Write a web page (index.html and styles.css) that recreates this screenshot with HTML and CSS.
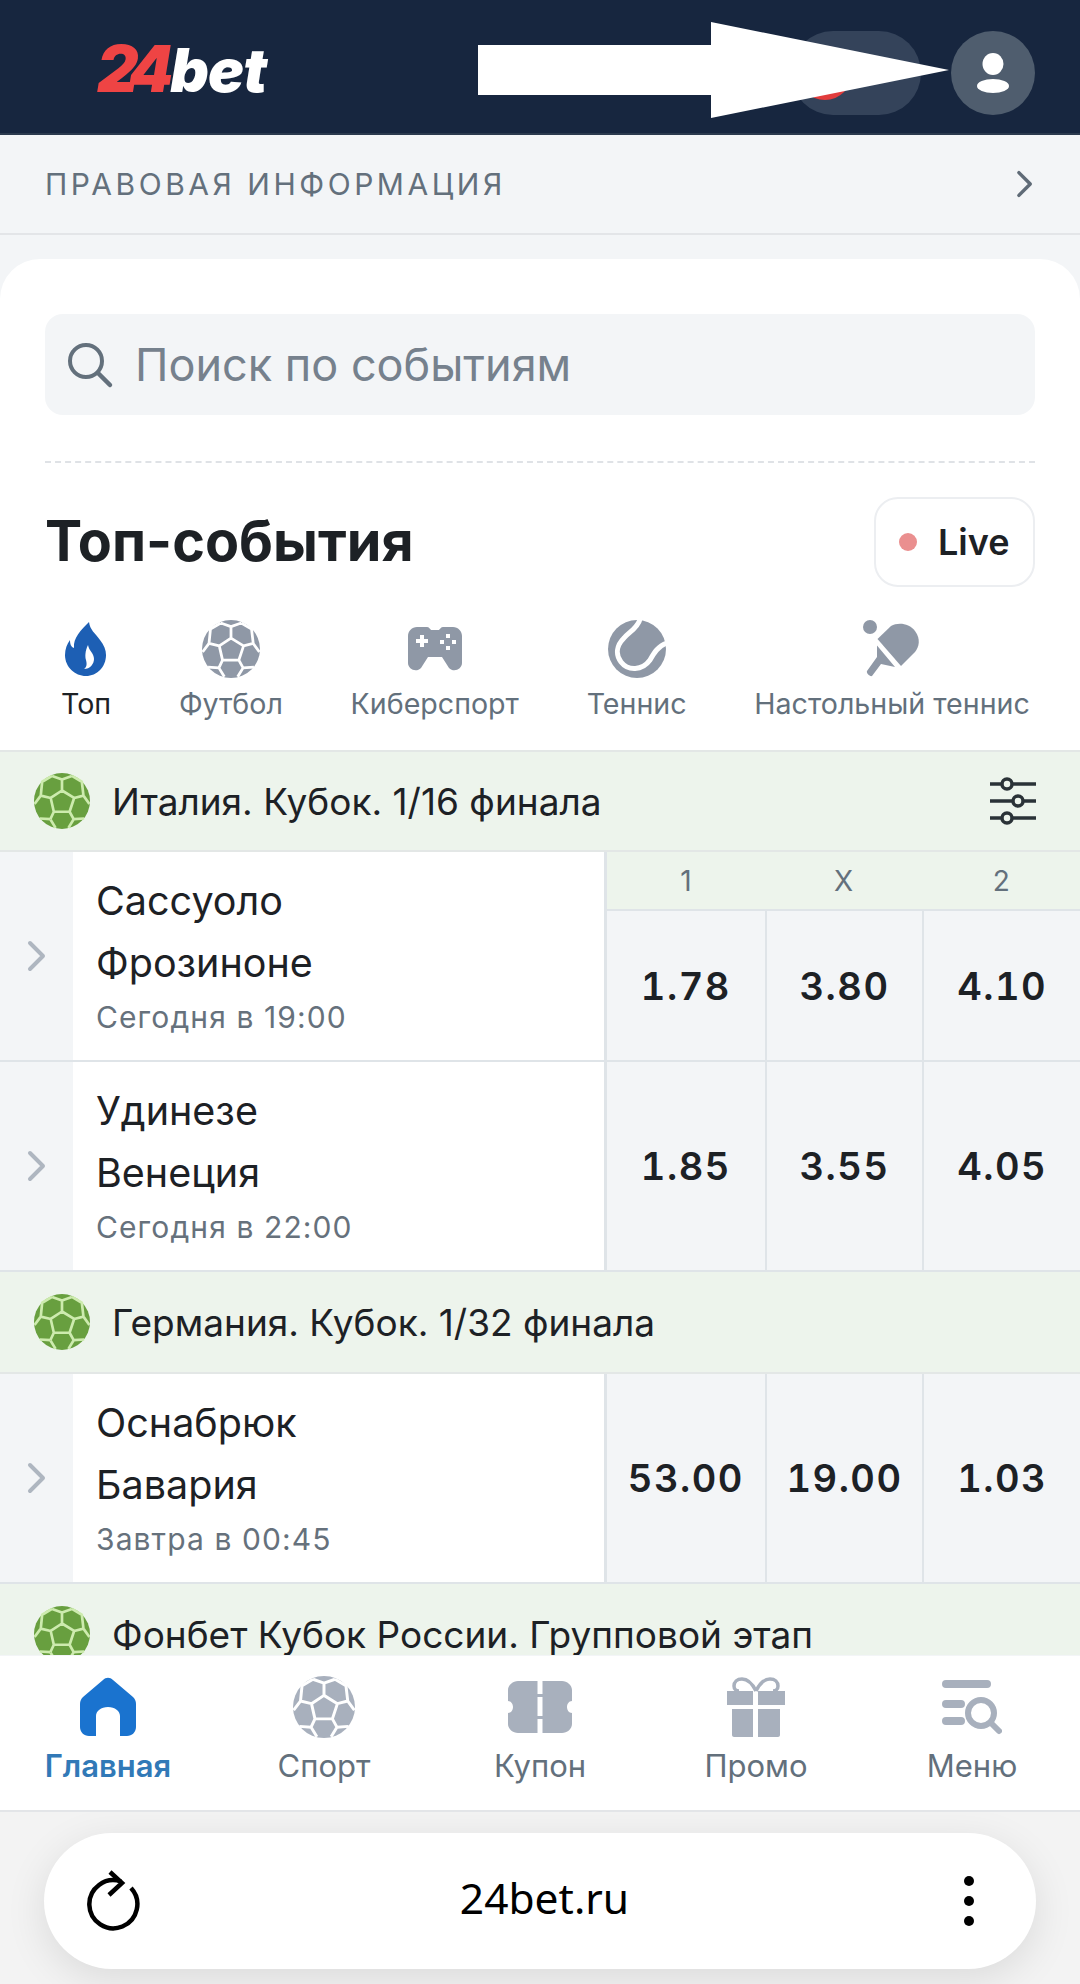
FILE: index.html
```html
<!DOCTYPE html>
<html lang="ru">
<head>
<meta charset="utf-8">
<title>24bet</title>
<link rel="stylesheet" href="styles.css">
</head>
<body>
<svg class="defs" width="0" height="0">
  <symbol id="ball" viewBox="0 0 48 48">
    <circle cx="24" cy="24" r="24" fill="currentColor"/>
    <path class="ball-line" d="M24 15l10.400 6.400-3.900 11.800H17L14.300 21.400zM24 15V5.500M34.400 21.400l8-2M30.500 33.200l3.500 6.400M17 33.200l-3 6.400M14.300 21.400l-8.500-2M24 5.500L15.500 2.500M24 5.500l8.500-3M15.500 2.500L7 7.500 5.800 19.400M32.500 2.500l8.500 5 1.400 11.900M5.800 19.400L.5 26.500M42.400 19.400l5.100 7.100M34 39.600l9 -.6M14 39.600l-9 -.6M34 39.600L29.500 47M14 39.600L18.500 47"/>
  </symbol>
  <symbol id="chev" viewBox="0 0 20 32">
    <path d="M3 3l13 13L3 29" fill="none" stroke="currentColor" stroke-width="4" stroke-linecap="round" stroke-linejoin="round"/>
  </symbol>
</svg>

<div class="page">
  <header class="topbar">
    <div class="logo"><span class="logo-num">24</span><span class="logo-word">bet</span></div>
    <div class="top-actions">
      <div class="balance-pill"><span class="red-dot"></span></div>
      <div class="avatar">
        <svg width="34" height="40" viewBox="0 0 34 40"><ellipse cx="17" cy="11" rx="10.500" ry="11" fill="#fff"/><ellipse cx="17" cy="33" rx="16" ry="7" fill="#fff"/></svg>
      </div>
    </div>
    <svg class="arrow" width="474" height="96" viewBox="0 0 474 96"><path d="M0 23H233V0L471 48 233 96V73H0z" fill="#fff"/></svg>
  </header>

  <div class="legal">
    <span class="legal-text">ПРАВОВАЯ ИНФОРМАЦИЯ</span>
    <svg class="legal-chev" width="18" height="28"><use href="#chev"/></svg>
  </div>

  <main class="content">
    <section class="card">
      <div class="search">
        <svg width="48" height="48" viewBox="0 0 48 48"><circle cx="20" cy="20" r="16" fill="none" stroke="#63707c" stroke-width="4"/><path d="M32 32l12 12" stroke="#63707c" stroke-width="4.500" stroke-linecap="round"/></svg>
        <span class="search-text">Поиск по событиям</span>
      </div>
      <div class="dash"></div>
      <div class="title-row">
        <h1 class="title">Топ-события</h1>
        <div class="live"><span class="live-dot"></span><span class="live-text">Live</span></div>
      </div>
      <nav class="tabs">
        <div class="tab tab-active">
          <svg class="tab-icon" width="42" height="54" viewBox="0 0 42 54"><path fill-rule="evenodd" fill="#1d5fb4" d="M24 0c1 8 6 11 11 18 4 5 6 10 6 15 0 12-9 21-20 21S0 45 0 33c0-6 2-11 5-15 0 4 1 7 4 8C8 16 16 8 24 0zM23 23c1 6 6 8 6 14 0 5-4 10-10 10 3-2 3-5 2-9-1-3-1-9 2-15z"/></svg>
          <span class="tab-label">Топ</span>
        </div>
        <div class="tab">
          <svg class="tab-icon ball-grey" width="58" height="58"><use href="#ball"/></svg>
          <span class="tab-label">Футбол</span>
        </div>
        <div class="tab">
          <svg class="tab-icon" width="54" height="44" viewBox="0 0 54 44"><path fill-rule="evenodd" fill="#8f98a6" d="M9 0h10c2 0 3 2 4 3h8c1-1 2-3 4-3h10c5 0 9 4 9 9v27c0 6-8 10-13 5l-7-11H20l-7 11C8 46 0 42 0 36V9c0-5 4-9 9-9zM12 8v4H8v4h4v4h4v-4h4v-4h-4V8zM38 7v4h4V7zM32 13v4h4v-4zM44 13v4h4v-4zM38 19v4h4v-4z"/></svg>
          <span class="tab-label">Киберспорт</span>
        </div>
        <div class="tab">
          <svg class="tab-icon" width="58" height="58" viewBox="0 0 58 58"><circle cx="29" cy="29" r="29" fill="#8f98a6"/><path d="M32-1C30 8 21 12 16 18 9 25 7 34 13 42c7 9 21 9 29-2 4-7 8-14 17-17" fill="none" stroke="#fff" stroke-width="5"/></svg>
          <span class="tab-label">Теннис</span>
        </div>
        <div class="tab">
          <svg class="tab-icon" width="58" height="58" viewBox="0 0 58 58"><circle cx="7" cy="7" r="7" fill="#8f98a6"/><path fill="#8f98a6" d="M14.500 19L28 6c7-4 18-3 24 5 6 8 4 16 0 21L38 46z"/><path fill="#8f98a6" d="M14 25.600L32 47l-14-3-9 12c-2 1-6-3-5-5l10-14z"/></svg>
          <span class="tab-label">Настольный теннис</span>
        </div>
      </nav>

      <div class="league">
        <svg class="ball-green" width="56" height="56"><use href="#ball"/></svg>
        <span class="league-name">Италия. Кубок. 1/16 финала</span>
        <svg class="filter" width="48" height="48" viewBox="0 0 48 48"><path d="M1 7h46M1 24h46M1 41h46" stroke="#2a3237" stroke-width="3.500"/><circle cx="18" cy="7" r="5" fill="#edf4ec" stroke="#2a3237" stroke-width="3.500"/><circle cx="29" cy="24" r="5" fill="#edf4ec" stroke="#2a3237" stroke-width="3.500"/><circle cx="18" cy="41" r="5" fill="#edf4ec" stroke="#2a3237" stroke-width="3.500"/></svg>
      </div>

      <div class="match">
        <div class="match-chev"><svg width="20" height="32"><use href="#chev"/></svg></div>
        <div class="match-info"><div class="team">Сассуоло</div><div class="team">Фрозиноне</div><div class="time">Сегодня в 19:00</div></div>
        <div class="odds">
          <div class="odds-head"><span>1</span><span>X</span><span>2</span></div>
          <div class="odds-vals"><span>1.78</span><span>3.80</span><span>4.10</span></div>
        </div>
      </div>
      <div class="match">
        <div class="match-chev"><svg width="20" height="32"><use href="#chev"/></svg></div>
        <div class="match-info"><div class="team">Удинезе</div><div class="team">Венеция</div><div class="time">Сегодня в 22:00</div></div>
        <div class="odds"><div class="odds-vals"><span>1.85</span><span>3.55</span><span>4.05</span></div></div>
      </div>

      <div class="league">
        <svg class="ball-green" width="56" height="56"><use href="#ball"/></svg>
        <span class="league-name">Германия. Кубок. 1/32 финала</span>
      </div>

      <div class="match">
        <div class="match-chev"><svg width="20" height="32"><use href="#chev"/></svg></div>
        <div class="match-info"><div class="team">Оснабрюк</div><div class="team">Бавария</div><div class="time">Завтра в 00:45</div></div>
        <div class="odds"><div class="odds-vals"><span>53.00</span><span>19.00</span><span>1.03</span></div></div>
      </div>

      <div class="league">
        <svg class="ball-green" width="56" height="56"><use href="#ball"/></svg>
        <span class="league-name">Фонбет Кубок России. Групповой этап</span>
      </div>
    </section>
  </main>

  <nav class="bottom">
    <div class="bt bt-active">
      <svg width="56" height="58" viewBox="0 0 56 58"><path fill="#1a73cf" d="M23 2c3-3 7-3 10 0l20 17c2 2 3 4 3 7v23c0 5-4 9-9 9h-7V38c0-5-5-9-12-9s-12 4-12 9v20H9c-5 0-9-4-9-9V26c0-3 1-5 3-7z"/></svg>
      <span>Главная</span>
    </div>
    <div class="bt">
      <svg class="ball-nav" width="62" height="62"><use href="#ball"/></svg>
      <span>Спорт</span>
    </div>
    <div class="bt">
      <svg width="64" height="52" viewBox="0 0 64 52"><path fill="#a8b0bd" d="M10 0H29.500V52H10C5 52 0 48 0 43V32c3 0 5-3 5-6s-2-6-5-6V9C0 4 5 0 10 0zM34.500 0H54c5 0 10 4 10 9v11c-3 0-5 3-5 6s2 6 5 6v11c0 5-5 9-10 9H34.500zM29 13h6v3h-6zM29 35h6v3h-6z"/></svg>
      <span>Купон</span>
    </div>
    <div class="bt">
      <svg width="58" height="60" viewBox="0 0 58 60"><path fill="none" stroke="#a8b0bd" stroke-width="3.500" d="M29 14C25 6 20 2 15 2c-5 0-8 3-8 7 0 3 2 5 5 5M29 14C33 6 38 2 43 2c5 0 8 3 8 7 0 3-2 5-5 5"/><path fill="#a8b0bd" d="M0 14h26v14H0zM31 14h27v14H31zM5 32h21v28H7c-1 0-2-1-2-2zM31 32h22v26c0 1-1 2-2 2H31z"/></svg>
      <span>Промо</span>
    </div>
    <div class="bt">
      <svg width="60" height="54" viewBox="0 0 60 54"><path d="M4 4h41M4 24h15M4 41h15" stroke="#a8b0bd" stroke-width="8" stroke-linecap="round" fill="none"/><circle cx="39" cy="33" r="13" fill="none" stroke="#a8b0bd" stroke-width="6"/><path d="M49 43l8 8" stroke="#a8b0bd" stroke-width="6" stroke-linecap="round"/></svg>
      <span>Меню</span>
    </div>
  </nav>

  <div class="browser">
    <div class="browser-pill">
      <svg width="56" height="62" viewBox="0 0 56 62"><path d="M36 11.500A24 24 0 1 0 46 18" fill="none" stroke="#000" stroke-width="4.500"/><path d="M25 2l12 11-13 12" fill="none" stroke="#000" stroke-width="4.500"/></svg>
      <span class="url">24bet.ru</span>
      <div class="dots"><i></i><i></i><i></i></div>
    </div>
  </div>
</div>
</body>
</html>
```
FILE: styles.css
```css
* { box-sizing: border-box; }
html, body { margin: 0; padding: 0; }
body { width: 1080px; height: 1984px; overflow: hidden; font-family: Inter, "Noto Sans", sans-serif; color: #1d2125; background: #f3f5f7; }
.defs { position: absolute; }
.page { width: 1080px; height: 1984px; display: flex; flex-direction: column; }

.topbar { position: relative; flex: none; height: 135px; background: #17263f; border-bottom: 2px solid #2b3a4e; display: flex; align-items: flex-start; justify-content: space-between; padding: 31px 45px 0 97px; }
.logo { font-family: Inter, sans-serif; font-weight: 900; font-style: italic; line-height: 70px; display: flex; gap: 6px; align-items: baseline; margin-top: 3px; }
.logo-num { color: #ef4444; font-size: 64px; letter-spacing: -9px; }
.logo-word { color: #fff; font-size: 60px; letter-spacing: -1px; }
.top-actions { display: flex; gap: 30px; }
.balance-pill { width: 130px; height: 84px; border-radius: 42px; background: #34435a; position: relative; overflow: hidden; }
.red-dot { position: absolute; left: 7px; top: 15px; width: 54px; height: 54px; border-radius: 50%; background: #e23c3c; }
.avatar { width: 84px; height: 84px; border-radius: 50%; background: #4f5d6e; display: flex; align-items: center; justify-content: center; }
.arrow { position: absolute; left: 478px; top: 22px; }

.legal { flex: none; height: 100px; display: flex; align-items: center; justify-content: space-between; padding: 0 46px 0 45px; border-bottom: 2px solid #e3e5e8; }
.legal-text { font-size: 30px; letter-spacing: 3.530px; color: #63707c; }
.legal-chev { color: #5f6b77; }

.content { flex: none; height: 1420px; overflow: hidden; padding-top: 24px; }
.card { background: #fff; border-radius: 40px 40px 0 0; padding-top: 55px; }

.search { margin: 0 45px; height: 101px; border-radius: 18px; background: #f3f5f7; display: flex; align-items: center; gap: 21px; padding-left: 21px; }
.search-text { font-size: 45px; color: #76818d; }
.dash { margin: 46px 45px 0; border-top: 2px dashed #dfe2e6; }

.title-row { margin: 34px 45px 0; height: 90px; display: flex; align-items: center; justify-content: space-between; }
.title { margin: 0 0 3px; font-size: 55.700px; font-weight: 650; color: #1d2125; }
.live { width: 161px; height: 90px; border: 2px solid #eceef1; border-radius: 24px; display: flex; align-items: center; gap: 21px; padding-left: 23px; }
.live-dot { width: 18px; height: 18px; border-radius: 50%; background: #ea8f8f; }
.live-text { font-size: 36px; font-weight: 600; }

.tabs { height: 163px; padding: 33px 0 0 61px; display: flex; gap: 67.700px; }
.tab { display: flex; flex-direction: column; align-items: center; white-space: nowrap; }
.tab-icon { height: 58px; }
.tab-label { margin-top: 5px; font-size: 28.600px; line-height: 42px; color: #63707c; }
.tab-active .tab-label { color: #1d2125; }

.ball-line { fill: none; stroke: var(--line, #fff); stroke-width: 2.300; stroke-linejoin: round; }
.ball-grey { color: #8f98a6; }
.ball-nav { color: #a8b0bd; }
.ball-green { color: #689f3f; --line: #cdebae; flex: none; }

.league { height: 102px; background: #edf4ec; border-top: 2px solid #e3e7e6; border-bottom: 2px solid #e3e7e6; display: flex; align-items: center; padding: 0 43px 0 34px; gap: 22px; }
.league-name { flex: 1; font-size: 37px; color: #1d2125; white-space: nowrap; }
.filter { flex: none; }

.match { height: 210px; display: grid; grid-template-columns: 73px 534px 1fr; border-bottom: 2px solid #dfe4e8; background: #f3f5f7; }
.match + .league { border-top: 0; height: 102px; }
.match-chev { display: flex; align-items: center; justify-content: center; color: #aeb6c0; }
.match-info { background: #fff; padding: 18px 0 0 23px; border-right: 3px solid #dfe4e8; }
.team { font-size: 39.500px; line-height: 62px; color: #1d2125; }
.time { font-size: 30px; letter-spacing: 1.100px; line-height: 46px; color: #66717c; }

.odds { display: flex; flex-direction: column; }
.odds-head { height: 59px; flex: none; background: #edf4ec; border-bottom: 2px solid #dfe4e8; display: grid; grid-template-columns: repeat(3, 1fr); align-items: center; text-align: center; font-size: 28px; color: #63707c; }
.odds-vals { flex: 1; display: grid; grid-template-columns: repeat(3, 1fr); align-items: stretch; font-size: 38px; font-weight: 600; letter-spacing: 1.500px; color: #1d2125; font-variant-numeric: tabular-nums; }
.odds-vals span { display: flex; align-items: center; justify-content: center; border-left: 2px solid #dfe4e8; }
.odds-vals span:first-child { border-left: 0; }

.bottom { flex: none; height: 156px; background: #fff; border-bottom: 2px solid #e3e5e8; display: grid; grid-template-columns: repeat(5, 1fr); position: relative; z-index: 1; margin-top: 1px; }
.bt { display: flex; flex-direction: column; align-items: center; padding-top: 20px; font-size: 31px; color: #63707c; }
.bt svg { height: 62px; display: block; }
.bt span { margin-top: 8px; line-height: 40px; }
.bt-active { color: #3179b7; font-weight: 600; }

.browser { flex: 1; background: #f3f3f3; padding: 21px 44px 0; }
.browser-pill { height: 136px; border-radius: 68px; background: #fff; box-shadow: 0 10px 40px rgba(0,0,0,.1); display: flex; align-items: center; justify-content: space-between; padding: 0 62px 0 41px; }
.url { font-size: 42.500px; line-height: 60px; color: #000; font-family: "Noto Sans", sans-serif; margin: -6px 16px 0 0; }
.dots { display: flex; flex-direction: column; gap: 10px; }
.dots i { display: block; width: 10px; height: 10px; border-radius: 50%; background: #000; }
```
